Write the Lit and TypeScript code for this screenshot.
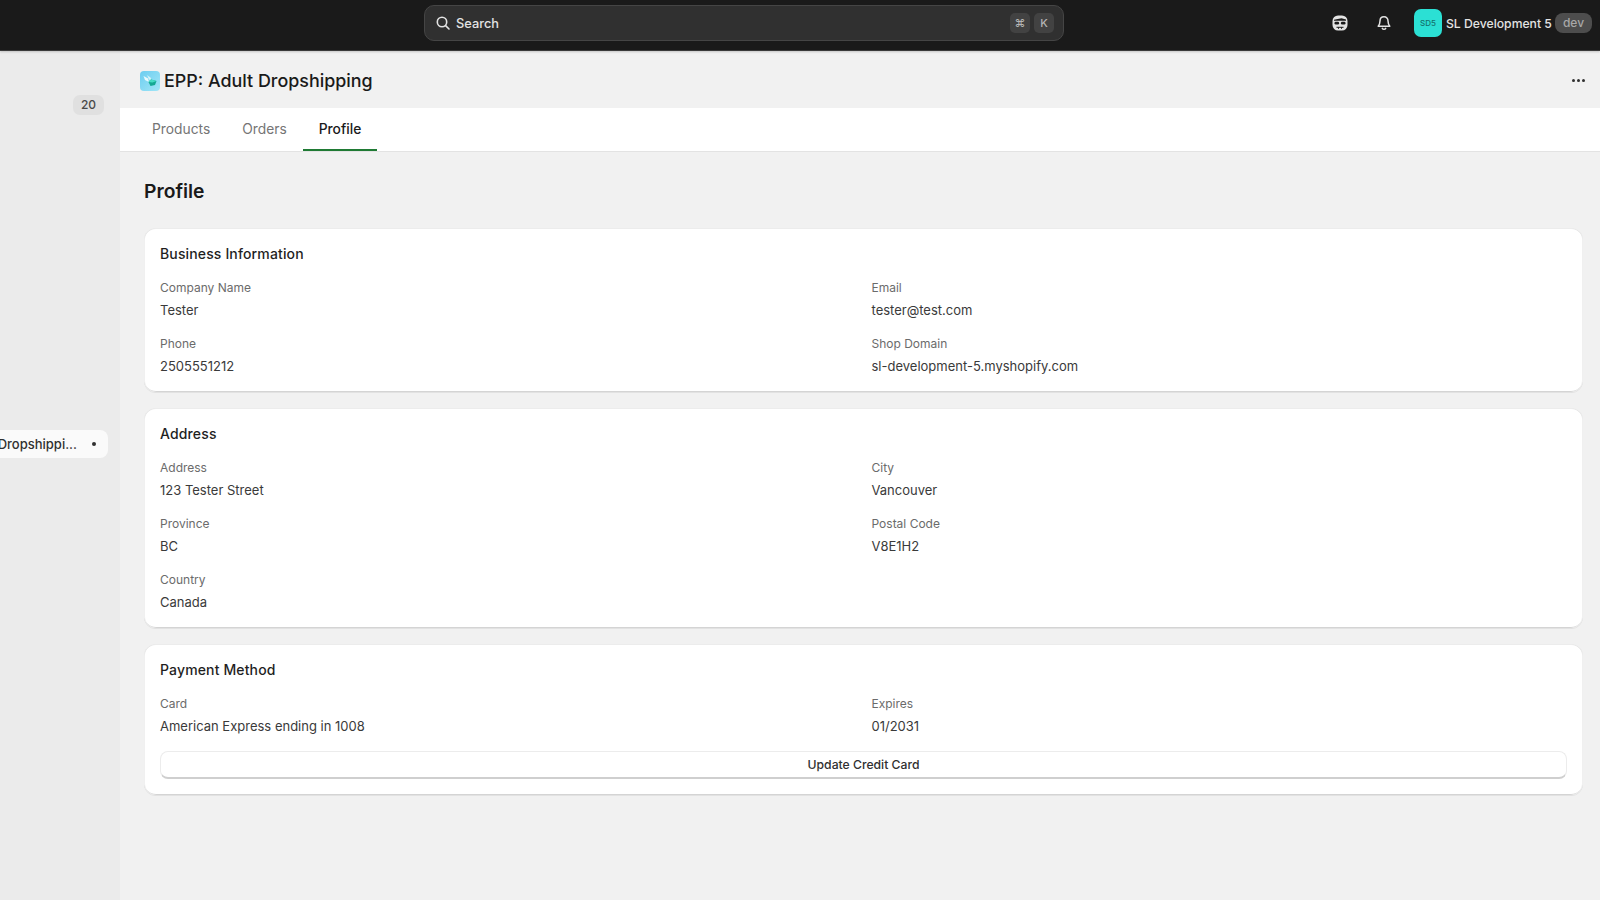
import { LitElement, html, css } from 'lit';
import { customElement } from 'lit/decorators.js';

interface Field {
  label: string;
  value: string;
}

const business: Field[] = [
  { label: 'Company Name', value: 'Tester' },
  { label: 'Email', value: 'tester@test.com' },
  { label: 'Phone', value: '2505551212' },
  { label: 'Shop Domain', value: 'sl-development-5.myshopify.com' },
];

const address: Field[] = [
  { label: 'Address', value: '123 Tester Street' },
  { label: 'City', value: 'Vancouver' },
  { label: 'Province', value: 'BC' },
  { label: 'Postal Code', value: 'V8E1H2' },
  { label: 'Country', value: 'Canada' },
];

const payment: Field[] = [
  { label: 'Card', value: 'American Express ending in 1008' },
  { label: 'Expires', value: '01/2031' },
];

@customElement('app-root')
export class AppRoot extends LitElement {
  static styles = css`
    :host {
      display: block;
      width: 1600px;
      height: 900px;
      overflow: hidden;
      background: #f1f1f1;
      font-family: Inter, 'Liberation Sans', sans-serif;
      color: #303030;
    }
    .topbar {
      position: relative;
      z-index: 2;
      box-sizing: border-box;
      height: 51px;
      padding-top: 5px;
      background: #1a1a1a;
      border-bottom: 1px solid #3a3a3a;
      box-shadow: 0 1px 2px rgba(0, 0, 0, 0.18);
      display: flex;
      align-items: flex-start;
    }
    .search {
      box-sizing: border-box;
      width: 640px;
      height: 36px;
      margin-left: 424px;
      padding: 0 9px 0 10px;
      display: flex;
      align-items: center;
      background: #303030;
      border: 1px solid #454545;
      border-radius: 10px;
      color: #e3e3e3;
      font-size: 12.8px;
      font-weight: 450;
    }
    .search svg {
      margin-right: 5px;
    }
    .search .text {
      flex: 1;
    }
    .key {
      width: 20px;
      height: 20px;
      margin-left: 4px;
      display: flex;
      align-items: center;
      justify-content: center;
      border-radius: 5px;
      background: #424242;
      color: #b5b5b5;
      font-size: 11px;
    }
    .actions {
      display: flex;
      align-items: center;
      height: 36px;
      margin-left: 268px;
    }
    .spy {
      margin-right: 28px;
    }
    .bell {
      margin-right: 22px;
    }
    .avatar {
      width: 28px;
      height: 28px;
      border-radius: 7px;
      background: #2be0d4;
      color: #14716c;
      font-size: 8px;
      font-weight: 500;
      display: flex;
      align-items: center;
      justify-content: center;
    }
    .shop {
      margin-left: 4px;
      color: #e3e3e3;
      font-size: 12.2px;
      font-weight: 550;
      white-space: nowrap;
    }
    .dev {
      margin-left: 3px;
      padding: 0 8px;
      height: 20px;
      line-height: 20px;
      border-radius: 8px;
      background: #4d4d4d;
      color: #a8a8a8;
      font-size: 12px;
      font-weight: 500;
    }
    .body {
      display: flex;
      height: 849px;
    }
    .sidebar {
      flex: none;
      width: 120px;
      overflow: hidden;
      background: #ebebeb;
      display: flex;
      flex-direction: column;
      align-items: flex-end;
    }
    .count {
      margin: 44px 16px 0 0;
      width: 31px;
      height: 20px;
      line-height: 20px;
      text-align: center;
      border-radius: 7px;
      background: #e0e0e0;
      color: #4a4a4a;
      font-size: 12px;
      font-weight: 500;
    }
    .nav-item {
      flex: none;
      margin: 315px 12px 0 0;
      box-sizing: border-box;
      width: 140px;
      height: 28px;
      padding-right: 12px;
      display: flex;
      align-items: center;
      justify-content: flex-end;
      border-radius: 8px;
      background: #fafafa;
      color: #303030;
      font-size: 13px;
      font-weight: 500;
      white-space: nowrap;
    }
    .nav-item .dot {
      flex: none;
      width: 4px;
      height: 4px;
      margin-left: 15px;
      border-radius: 50%;
      background: #303030;
    }
    main {
      flex: 1;
      min-width: 0;
    }
    .title-bar {
      height: 57px;
      box-sizing: border-box;
      padding: 2px 15px 0 20px;
      display: flex;
      align-items: center;
    }
    .title-bar svg.logo {
      margin-right: 4px;
    }
    h1 {
      flex: 1;
      margin: 0;
      color: #1a1a1a;
      font-size: 17.9px;
      font-weight: 500;
    }
    .more {
      display: flex;
      gap: 2px;
    }
    .more span {
      width: 3px;
      height: 3px;
      border-radius: 50%;
      background: #303030;
    }
    .tabs {
      height: 43px;
      padding-left: 16px;
      display: flex;
      background: #fff;
      border-bottom: 1px solid #e3e3e3;
    }
    .tab {
      box-sizing: border-box;
      height: 43px;
      padding: 0 16px;
      display: flex;
      align-items: center;
      color: #757575;
      font-size: 13.8px;
      font-weight: 400;
      border-bottom: 2px solid transparent;
    }
    .tab.active {
      color: #1a1a1a;
      font-weight: 500;
      border-bottom-color: #1f7a34;
    }
    .content {
      padding: 27px 17px 0 24px;
    }
    h2 {
      margin: 0 0 25px;
      color: #1a1a1a;
      font-size: 19.3px;
      line-height: 24px;
      font-weight: 600;
    }
    .card {
      margin-bottom: 16px;
      padding: 16px;
      background: #fff;
      border-radius: 12px;
      box-shadow: 0 1px 0 0 rgba(26, 26, 26, 0.07), 0 1px 0 0 rgba(208, 208, 208, 0.4) inset,
        1px 0 0 0 #f0f0f0 inset, -1px 0 0 0 #f0f0f0 inset, 0 -1px 0 0 #d4d4d4 inset;
    }
    h3 {
      margin: 0 0 14px;
      color: #1f1f1f;
      font-size: 14px;
      line-height: 20px;
      font-weight: 550;
      letter-spacing: 0.14px;
    }
    .grid {
      display: grid;
      grid-template-columns: 1fr 1fr;
      gap: 14px 16px;
    }
    .label {
      color: #6b6b6b;
      font-size: 12px;
      line-height: 20px;
    }
    .value {
      margin-top: 2px;
      color: #3a3a3a;
      font-size: 13px;
      line-height: 20px;
    }
    button {
      display: block;
      width: 100%;
      height: 28px;
      margin-top: 15px;
      padding: 0;
      border: 1px solid #ececec;
      border-bottom: 2px solid #cfcfcf;
      border-radius: 8px;
      background: #fff;
      color: #303030;
      font: 500 12.2px Inter, 'Liberation Sans', sans-serif;
    }
  `;

  private renderFields(fields: Field[]) {
    return html`<div class="grid">
      ${fields.map(
        (f) => html`<div>
          <div class="label">${f.label}</div>
          <div class="value">${f.value}</div>
        </div>`
      )}
    </div>`;
  }

  render() {
    return html`
      <div class="topbar">
        <div class="search">
          <svg width="16" height="16" viewBox="0 0 16 16" fill="none" stroke="#e3e3e3" stroke-width="1.6" stroke-linecap="round">
            <circle cx="7" cy="7" r="4.7"></circle>
            <path d="M10.6 10.6 14 14"></path>
          </svg>
          <span class="text">Search</span>
          <span class="key">⌘</span>
          <span class="key">K</span>
        </div>
        <div class="actions">
          <svg class="spy" width="16" height="16" viewBox="0 0 16 16">
            <rect x="0.5" y="0.5" width="15" height="15" rx="5.5" fill="#e3e3e3"></rect>
            <path d="M2 4.800 9.500 3.200 14 4.600V5.800H2Z" fill="#1a1a1a"></path>
            <rect x="2.500" y="6.800" width="4.600" height="2.800" rx="1.300" fill="#1a1a1a"></rect>
            <rect x="8.900" y="6.800" width="4.600" height="2.800" rx="1.300" fill="#1a1a1a"></rect>
            <path d="M4.500 12.300h7M6.500 12.300v1.500M9.500 12.300v1.500" stroke="#1a1a1a" stroke-width="1"></path>
          </svg>
          <svg class="bell" width="16" height="16" viewBox="0 0 16 16" fill="none" stroke="#e3e3e3" stroke-width="1.500" stroke-linejoin="round">
            <path d="M8 1.800c-2.500 0-4 1.900-4 4.200 0 2.600-.6 3.700-1.800 5.200h11.600C12.600 9.700 12 8.600 12 6c0-2.300-1.500-4.200-4-4.200Z"></path>
            <path d="M6.300 13.300a1.900 1.900 0 0 0 3.400 0" stroke-linecap="round"></path>
          </svg>
          <div class="avatar">SD5</div>
          <span class="shop">SL Development 5</span>
          <span class="dev">dev</span>
        </div>
      </div>
      <div class="body">
        <div class="sidebar">
          <div class="count">20</div>
          <div class="nav-item"><span>Adult Dropshippi...</span><span class="dot"></span></div>
        </div>
        <main>
          <div class="title-bar">
            <svg class="logo" width="20" height="20" viewBox="0 0 20 20">
              <defs>
                <linearGradient id="logo-bg" x1="0" y1="0" x2="1" y2="1">
                  <stop offset="0" stop-color="#6ccdf0"></stop>
                  <stop offset="1" stop-color="#a2e6f7"></stop>
                </linearGradient>
              </defs>
              <rect width="20" height="20" rx="4" fill="url(#logo-bg)"></rect>
              <path d="M3.500 5 8 7.500 9 11 5 9Z" fill="#eafafd"></path>
              <path d="M7 4 11 7 10.500 10 8.500 7.500Z" fill="#d5f3fa"></path>
              <path d="M8.500 11 11 8.500 16.500 10 15 14 10.500 15Z" fill="#14a893"></path>
              <path d="M8.500 11 12.500 11.500 16.500 10 11 8.500Z" fill="#45dcc3"></path>
            </svg>
            <h1>EPP: Adult Dropshipping</h1>
            <div class="more"><span></span><span></span><span></span></div>
          </div>
          <div class="tabs">
            <div class="tab">Products</div>
            <div class="tab">Orders</div>
            <div class="tab active">Profile</div>
          </div>
          <div class="content">
            <h2>Profile</h2>
            <section class="card">
              <h3>Business Information</h3>
              ${this.renderFields(business)}
            </section>
            <section class="card">
              <h3>Address</h3>
              ${this.renderFields(address)}
            </section>
            <section class="card">
              <h3>Payment Method</h3>
              ${this.renderFields(payment)}
              <button>Update Credit Card</button>
            </section>
          </div>
        </main>
      </div>
    `;
  }
}

declare global {
  interface HTMLElementTagNameMap {
    'app-root': AppRoot;
  }
}
